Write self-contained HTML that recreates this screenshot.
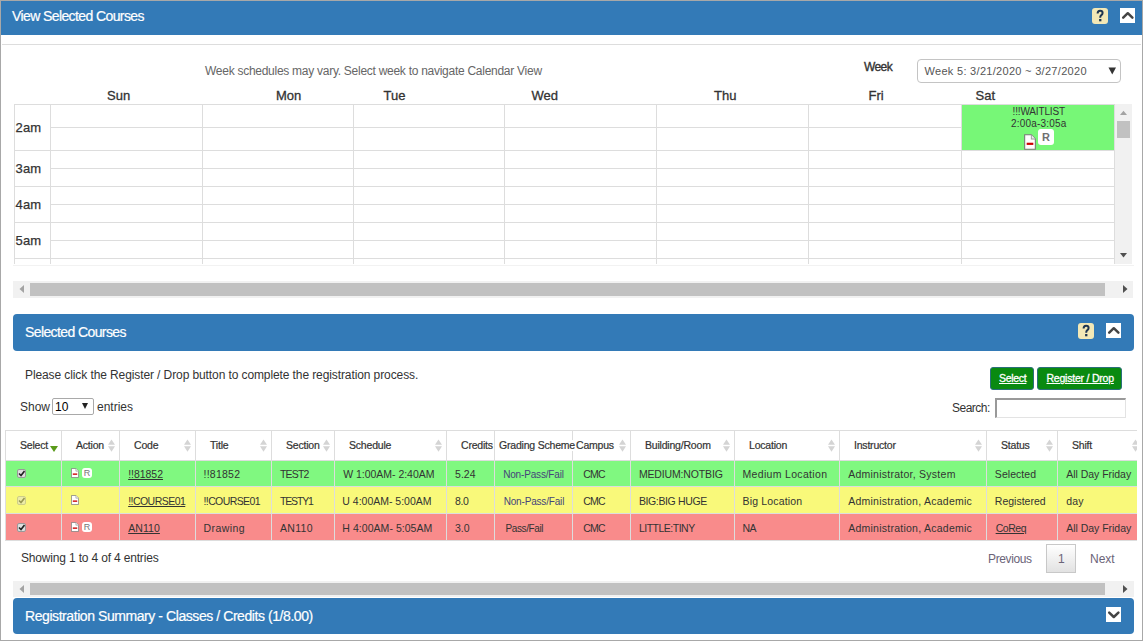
<!DOCTYPE html><html><head><meta charset="utf-8"><style>
*{box-sizing:border-box;margin:0;padding:0}
html,body{width:1143px;height:641px;overflow:hidden;background:#fff;font-family:"Liberation Sans",sans-serif;color:#333}
.a{position:absolute}
.t{position:absolute;white-space:nowrap}
.help{position:absolute;width:16px;height:16px;background:#f3e8b6;border-radius:3px}
.coll{position:absolute;width:15px;height:15px;background:#fff}
</style></head><body>
<div class="a" style="left:0px;top:0px;width:1143px;height:641px;border:1px solid #a8a8a8"></div>
<div class="a" style="left:1px;top:1px;width:1141px;height:34px;background:#337ab7"></div>
<div class="t" style="left:12px;top:9.15px;font-size:14px;line-height:14px;color:#fff;letter-spacing:-0.6px;-webkit-text-stroke:0.2px #fff">View Selected Courses</div>
<div class="help" style="left:1092px;top:8px"><svg width="16" height="16" viewBox="0 0 16 16" style="position:absolute;left:0;top:0"><path d="M5.6 5.6 C5.6 3.7 6.7 2.8 8.1 2.8 C9.6 2.8 10.6 3.8 10.6 5.1 C10.6 6.3 9.8 6.9 9.1 7.4 C8.4 7.9 8.2 8.4 8.2 9.8" fill="none" stroke="#1f3550" stroke-width="2"/><rect x="7.1" y="11" width="2.3" height="2.3" fill="#1f3550"/></svg></div>
<div class="coll" style="left:1120px;top:8px"><svg width="15" height="15" viewBox="0 0 15 15" style="position:absolute;left:0;top:0"><path d="M3.2 9.6 L7.8 5.2 L12.4 9.6" fill="none" stroke="#444" stroke-width="2.5" stroke-linecap="round" stroke-linejoin="round"/></svg></div>
<div class="a" style="left:2px;top:44px;width:1139px;height:1px;background:#ddd"></div>
<div class="t" style="left:205px;top:64.84px;font-size:12px;line-height:12px;color:#666;letter-spacing:-0.27px">Week schedules may vary. Select week to navigate Calendar View</div>
<div class="t" style="left:864px;top:61.34px;font-size:12px;line-height:12px;color:#333;-webkit-text-stroke:0.35px #333;letter-spacing:-0.6px">Week</div>
<div class="a" style="left:917px;top:59px;width:204px;height:24px;border:1px solid #c4c4c4;border-radius:4px;background:#fff"></div>
<div class="t" style="left:924.5px;top:65.99px;font-size:11px;line-height:11px;color:#555;letter-spacing:0.3px">Week 5: 3/21/2020 ~ 3/27/2020</div>
<svg class="a" style="left:1108px;top:67px" width="9" height="8" viewBox="0 0 9 8"><path d="M0.5 0.5 H8 L4.25 7.5 Z" fill="#333"/></svg>
<div class="t" style="left:107px;top:89.00px;font-size:13px;line-height:13px;color:#333;-webkit-text-stroke:0.3px #333">Sun</div>
<div class="t" style="left:276px;top:89.00px;font-size:13px;line-height:13px;color:#333;-webkit-text-stroke:0.3px #333">Mon</div>
<div class="t" style="left:383.5px;top:89.00px;font-size:13px;line-height:13px;color:#333;-webkit-text-stroke:0.3px #333">Tue</div>
<div class="t" style="left:531.5px;top:89.00px;font-size:13px;line-height:13px;color:#333;-webkit-text-stroke:0.3px #333">Wed</div>
<div class="t" style="left:714px;top:89.00px;font-size:13px;line-height:13px;color:#333;-webkit-text-stroke:0.3px #333">Thu</div>
<div class="t" style="left:868.5px;top:89.00px;font-size:13px;line-height:13px;color:#333;-webkit-text-stroke:0.3px #333">Fri</div>
<div class="t" style="left:975.5px;top:89.00px;font-size:13px;line-height:13px;color:#333;-webkit-text-stroke:0.3px #333">Sat</div>
<div class="a" style="left:14px;top:104px;width:1100px;height:1px;background:#ddd"></div>
<div class="a" style="left:50px;top:127px;width:1064px;height:1px;background:#ddd"></div>
<div class="a" style="left:14px;top:150px;width:1100px;height:1px;background:#ddd"></div>
<div class="a" style="left:50px;top:168px;width:1064px;height:1px;background:#ddd"></div>
<div class="a" style="left:14px;top:186px;width:1100px;height:1px;background:#ddd"></div>
<div class="a" style="left:50px;top:204px;width:1064px;height:1px;background:#ddd"></div>
<div class="a" style="left:14px;top:222px;width:1100px;height:1px;background:#ddd"></div>
<div class="a" style="left:50px;top:240px;width:1064px;height:1px;background:#ddd"></div>
<div class="a" style="left:14px;top:258px;width:1100px;height:1px;background:#ddd"></div>
<div class="a" style="left:14px;top:104px;width:1px;height:160px;background:#ddd"></div>
<div class="a" style="left:50px;top:104px;width:1px;height:160px;background:#ddd"></div>
<div class="a" style="left:202px;top:104px;width:1px;height:160px;background:#ddd"></div>
<div class="a" style="left:353px;top:104px;width:1px;height:160px;background:#ddd"></div>
<div class="a" style="left:504px;top:104px;width:1px;height:160px;background:#ddd"></div>
<div class="a" style="left:656px;top:104px;width:1px;height:160px;background:#ddd"></div>
<div class="a" style="left:808px;top:104px;width:1px;height:160px;background:#ddd"></div>
<div class="a" style="left:961px;top:104px;width:1px;height:160px;background:#ddd"></div>
<div class="a" style="left:1114px;top:104px;width:1px;height:160px;background:#ddd"></div>
<div class="t" style="left:15.5px;top:121.00px;font-size:13px;line-height:13px;-webkit-text-stroke:0.25px #333;letter-spacing:0.2px">2am</div>
<div class="t" style="left:15.5px;top:162.00px;font-size:13px;line-height:13px;-webkit-text-stroke:0.25px #333;letter-spacing:0.2px">3am</div>
<div class="t" style="left:15.5px;top:198.00px;font-size:13px;line-height:13px;-webkit-text-stroke:0.25px #333;letter-spacing:0.2px">4am</div>
<div class="t" style="left:15.5px;top:234.00px;font-size:13px;line-height:13px;-webkit-text-stroke:0.25px #333;letter-spacing:0.2px">5am</div>
<div class="a" style="left:962px;top:105px;width:152px;height:45px;background:#77f777"></div>
<div class="t" style="left:1012.5px;top:107.03px;font-size:10px;line-height:10px;color:#333;letter-spacing:-0.15px">!!!WAITLIST</div>
<div class="t" style="left:1011px;top:119.03px;font-size:10px;line-height:10px;color:#333;letter-spacing:0.2px">2:00a-3:05a</div>
<svg class="a" style="left:1024px;top:134px" width="12" height="16" viewBox="0 0 9 11" preserveAspectRatio="none"><path d="M0.5 0.5 H5.5 L8.5 3.5 V10.5 H0.5 Z" fill="#fff" stroke="#777" stroke-width="0.8"/><path d="M5.5 0.5 V3.5 H8.5" fill="#eee" stroke="#999" stroke-width="0.7"/><rect x="2" y="6" width="5" height="1.5" fill="#c00"/></svg>
<div class="a" style="left:1038px;top:129px;width:16px;height:16px;background:#fff;border-radius:3px;color:#707070;font-weight:bold;font-size:11px;line-height:16px;text-align:center">R</div>
<div class="a" style="left:13px;top:265px;width:1121px;height:1px;background:#f2f2f2"></div>
<div class="a" style="left:1115px;top:104px;width:17px;height:160px;background:#f1f1f1"></div>
<div class="a" style="left:1117px;top:121px;width:13px;height:17px;background:#c1c1c1"></div>
<svg class="a" style="left:1120px;top:110px" width="7" height="5" viewBox="0 0 7 5"><path d="M0 5 L3.5 0.8 L7 5Z" fill="#a3a3a3"/></svg>
<svg class="a" style="left:1120px;top:252.5px" width="7" height="5" viewBox="0 0 7 5"><path d="M0 0 L3.5 4.5 L7 0Z" fill="#505050"/></svg>
<div class="a" style="left:13px;top:281px;width:1120px;height:17px;background:#f1f1f1"></div>
<div class="a" style="left:30px;top:283px;width:1075px;height:13px;background:#c1c1c1"></div>
<svg class="a" style="left:19px;top:285px" width="5" height="8" viewBox="0 0 5 8"><path d="M5 0 L0.5 4 L5 8Z" fill="#a3a3a3"/></svg>
<svg class="a" style="left:1123px;top:285px" width="5" height="8" viewBox="0 0 5 8"><path d="M0 0 L4.5 4 L0 8Z" fill="#505050"/></svg>
<div class="a" style="left:13px;top:314px;width:1121px;height:37px;background:#337ab7;border-radius:4px"></div>
<div class="t" style="left:25px;top:325.15px;font-size:14px;line-height:14px;color:#fff;letter-spacing:-0.6px;-webkit-text-stroke:0.2px #fff">Selected Courses</div>
<div class="help" style="left:1078px;top:323px"><svg width="16" height="16" viewBox="0 0 16 16" style="position:absolute;left:0;top:0"><path d="M5.6 5.6 C5.6 3.7 6.7 2.8 8.1 2.8 C9.6 2.8 10.6 3.8 10.6 5.1 C10.6 6.3 9.8 6.9 9.1 7.4 C8.4 7.9 8.2 8.4 8.2 9.8" fill="none" stroke="#1f3550" stroke-width="2"/><rect x="7.1" y="11" width="2.3" height="2.3" fill="#1f3550"/></svg></div>
<div class="coll" style="left:1106px;top:323px"><svg width="15" height="15" viewBox="0 0 15 15" style="position:absolute;left:0;top:0"><path d="M3.2 9.6 L7.8 5.2 L12.4 9.6" fill="none" stroke="#444" stroke-width="2.5" stroke-linecap="round" stroke-linejoin="round"/></svg></div>
<div class="t" style="left:25px;top:368.84px;font-size:12px;line-height:12px;color:#333;letter-spacing:-0.1px">Please click the Register / Drop button to complete the registration process.</div>
<div class="t" style="left:20px;top:401.34px;font-size:12px;line-height:12px;">Show</div>
<div class="a" style="left:52px;top:398px;width:42px;height:17px;border:1px solid #a9a9a9;border-radius:2px;background:#fff"></div>
<div class="t" style="left:55px;top:400.84px;font-size:12px;line-height:12px;color:#000">10</div>
<svg class="a" style="left:82px;top:403px" width="6" height="6" viewBox="0 0 6 6"><path d="M0 0 H6 L3 6Z" fill="#222"/></svg>
<div class="t" style="left:97px;top:401.34px;font-size:12px;line-height:12px;">entries</div>
<div class="a" style="left:990px;top:367px;width:44px;height:23px;background:#098a10;border-radius:3px;border:1px solid #2a6f7a"></div>
<div class="a" style="left:1037px;top:367px;width:85px;height:23px;background:#098a10;border-radius:3px;border:1px solid #2a6f7a"></div>
<div class="t" style="left:999px;top:373.11px;font-size:10.5px;line-height:10.5px;color:#fff;text-decoration:underline;-webkit-text-stroke:0.3px #fff;letter-spacing:-0.3px">Select</div>
<div class="t" style="left:1046.5px;top:373.11px;font-size:10.5px;line-height:10.5px;color:#fff;text-decoration:underline;-webkit-text-stroke:0.3px #fff;letter-spacing:-0.22px">Register / Drop</div>
<div class="t" style="left:952px;top:401.84px;font-size:12px;line-height:12px;letter-spacing:-0.5px">Search:</div>
<div class="a" style="left:995px;top:398px;width:131px;height:20px;border-style:solid;border-width:2px 1px 1px 2px;border-color:#999 #e3e3e3 #e3e3e3 #999;background:#fff"></div>
<div class="a" style="left:0;top:0;width:1137px;height:641px;overflow:hidden">
<div class="a" style="left:5px;top:460px;width:1140px;height:26px;background:#80f880"></div>
<div class="a" style="left:5px;top:486px;width:1140px;height:27px;background:#f9f97a"></div>
<div class="a" style="left:5px;top:513px;width:1140px;height:27px;background:#f98b8b"></div>
<div class="a" style="left:5px;top:430px;width:1140px;height:1px;background:#ddd"></div>
<div class="a" style="left:5px;top:460px;width:1140px;height:1px;background:#ddd"></div>
<div class="a" style="left:5px;top:486px;width:1140px;height:1px;background:#ddd"></div>
<div class="a" style="left:5px;top:513px;width:1140px;height:1px;background:#ddd"></div>
<div class="a" style="left:5px;top:540px;width:1140px;height:1px;background:#ddd"></div>
<div class="a" style="left:5px;top:430px;width:1px;height:111px;background:#ddd"></div>
<div class="a" style="left:61px;top:430px;width:1px;height:111px;background:#ddd"></div>
<div class="a" style="left:119px;top:430px;width:1px;height:111px;background:#ddd"></div>
<div class="a" style="left:195px;top:430px;width:1px;height:111px;background:#ddd"></div>
<div class="a" style="left:271px;top:430px;width:1px;height:111px;background:#ddd"></div>
<div class="a" style="left:334px;top:430px;width:1px;height:111px;background:#ddd"></div>
<div class="a" style="left:446px;top:430px;width:1px;height:111px;background:#ddd"></div>
<div class="a" style="left:494px;top:430px;width:1px;height:111px;background:#ddd"></div>
<div class="a" style="left:572px;top:430px;width:1px;height:111px;background:#ddd"></div>
<div class="a" style="left:630px;top:430px;width:1px;height:111px;background:#ddd"></div>
<div class="a" style="left:734px;top:430px;width:1px;height:111px;background:#ddd"></div>
<div class="a" style="left:839px;top:430px;width:1px;height:111px;background:#ddd"></div>
<div class="a" style="left:986px;top:430px;width:1px;height:111px;background:#ddd"></div>
<div class="a" style="left:1057px;top:430px;width:1px;height:111px;background:#ddd"></div>
<div class="t" style="left:20px;top:440.11px;font-size:10.5px;line-height:10.5px;color:#333;letter-spacing:-0.2px;-webkit-text-stroke:0.2px #333">Select</div>
<div class="t" style="left:76px;top:440.11px;font-size:10.5px;line-height:10.5px;color:#333;letter-spacing:-0.2px;-webkit-text-stroke:0.2px #333">Action</div>
<svg class="a" style="left:108px;top:439px" width="7" height="14" viewBox="0 0 7 14"><path d="M0 5.8 L3.5 0.5 L7 5.8Z M0 7.2 L3.5 12.8 L7 7.2Z" fill="#d4d4d4"/></svg>
<div class="t" style="left:134px;top:440.11px;font-size:10.5px;line-height:10.5px;color:#333;letter-spacing:-0.2px;-webkit-text-stroke:0.2px #333">Code</div>
<svg class="a" style="left:184px;top:439px" width="7" height="14" viewBox="0 0 7 14"><path d="M0 5.8 L3.5 0.5 L7 5.8Z M0 7.2 L3.5 12.8 L7 7.2Z" fill="#d4d4d4"/></svg>
<div class="t" style="left:210px;top:440.11px;font-size:10.5px;line-height:10.5px;color:#333;letter-spacing:-0.2px;-webkit-text-stroke:0.2px #333">Title</div>
<svg class="a" style="left:260px;top:439px" width="7" height="14" viewBox="0 0 7 14"><path d="M0 5.8 L3.5 0.5 L7 5.8Z M0 7.2 L3.5 12.8 L7 7.2Z" fill="#d4d4d4"/></svg>
<div class="t" style="left:286px;top:440.11px;font-size:10.5px;line-height:10.5px;color:#333;letter-spacing:-0.2px;-webkit-text-stroke:0.2px #333">Section</div>
<svg class="a" style="left:323px;top:439px" width="7" height="14" viewBox="0 0 7 14"><path d="M0 5.8 L3.5 0.5 L7 5.8Z M0 7.2 L3.5 12.8 L7 7.2Z" fill="#d4d4d4"/></svg>
<div class="t" style="left:349px;top:440.11px;font-size:10.5px;line-height:10.5px;color:#333;letter-spacing:-0.2px;-webkit-text-stroke:0.2px #333">Schedule</div>
<svg class="a" style="left:435px;top:439px" width="7" height="14" viewBox="0 0 7 14"><path d="M0 5.8 L3.5 0.5 L7 5.8Z M0 7.2 L3.5 12.8 L7 7.2Z" fill="#d4d4d4"/></svg>
<div class="t" style="left:461px;top:440.11px;font-size:10.5px;line-height:10.5px;color:#333;letter-spacing:-0.2px;-webkit-text-stroke:0.2px #333;background:#fff">Credits</div>
<div class="t" style="left:499px;top:440.11px;font-size:10.5px;line-height:10.5px;color:#333;letter-spacing:-0.2px;-webkit-text-stroke:0.2px #333;background:#fff">Grading Scheme</div>
<div class="t" style="left:576px;top:440.11px;font-size:10.5px;line-height:10.5px;color:#333;letter-spacing:-0.2px;-webkit-text-stroke:0.2px #333">Campus</div>
<svg class="a" style="left:619px;top:439px" width="7" height="14" viewBox="0 0 7 14"><path d="M0 5.8 L3.5 0.5 L7 5.8Z M0 7.2 L3.5 12.8 L7 7.2Z" fill="#d4d4d4"/></svg>
<div class="t" style="left:645px;top:440.11px;font-size:10.5px;line-height:10.5px;color:#333;letter-spacing:-0.2px;-webkit-text-stroke:0.2px #333">Building/Room</div>
<svg class="a" style="left:723px;top:439px" width="7" height="14" viewBox="0 0 7 14"><path d="M0 5.8 L3.5 0.5 L7 5.8Z M0 7.2 L3.5 12.8 L7 7.2Z" fill="#d4d4d4"/></svg>
<div class="t" style="left:749px;top:440.11px;font-size:10.5px;line-height:10.5px;color:#333;letter-spacing:-0.2px;-webkit-text-stroke:0.2px #333">Location</div>
<svg class="a" style="left:828px;top:439px" width="7" height="14" viewBox="0 0 7 14"><path d="M0 5.8 L3.5 0.5 L7 5.8Z M0 7.2 L3.5 12.8 L7 7.2Z" fill="#d4d4d4"/></svg>
<div class="t" style="left:854px;top:440.11px;font-size:10.5px;line-height:10.5px;color:#333;letter-spacing:-0.2px;-webkit-text-stroke:0.2px #333">Instructor</div>
<svg class="a" style="left:975px;top:439px" width="7" height="14" viewBox="0 0 7 14"><path d="M0 5.8 L3.5 0.5 L7 5.8Z M0 7.2 L3.5 12.8 L7 7.2Z" fill="#d4d4d4"/></svg>
<div class="t" style="left:1001px;top:440.11px;font-size:10.5px;line-height:10.5px;color:#333;letter-spacing:-0.2px;-webkit-text-stroke:0.2px #333">Status</div>
<svg class="a" style="left:1046px;top:439px" width="7" height="14" viewBox="0 0 7 14"><path d="M0 5.8 L3.5 0.5 L7 5.8Z M0 7.2 L3.5 12.8 L7 7.2Z" fill="#d4d4d4"/></svg>
<div class="t" style="left:1072px;top:440.11px;font-size:10.5px;line-height:10.5px;color:#333;letter-spacing:-0.2px;-webkit-text-stroke:0.2px #333">Shift</div>
<svg class="a" style="left:1132px;top:439px" width="7" height="14" viewBox="0 0 7 14"><path d="M0 5.8 L3.5 0.5 L7 5.8Z M0 7.2 L3.5 12.8 L7 7.2Z" fill="#d4d4d4"/></svg>
<svg class="a" style="left:50px;top:446px" width="8" height="6" viewBox="0 0 8 6"><path d="M0 0 H8 L4 6Z" fill="#5a9a1a"/></svg>
<div class="t" style="left:128.16px;top:469.21px;font-size:10.5px;line-height:10.5px;color:#333;text-decoration:underline;text-underline-offset:1px;letter-spacing:-0.028px">!!81852</div>
<div class="t" style="left:203.52px;top:469.21px;font-size:10.5px;line-height:10.5px;color:#333;letter-spacing:0.240px">!!81852</div>
<div class="t" style="left:280.0px;top:469.21px;font-size:10.5px;line-height:10.5px;color:#333;letter-spacing:-0.840px">TEST2</div>
<div class="t" style="left:343.16px;top:469.21px;font-size:10.5px;line-height:10.5px;color:#333;letter-spacing:-0.020px">W 1:00AM- 2:40AM</div>
<div class="t" style="left:455.0px;top:469.21px;font-size:10.5px;line-height:10.5px;color:#333;letter-spacing:0.052px">5.24</div>
<div class="t" style="left:503.2px;top:469.64px;font-size:10px;line-height:10px;color:#45457a;letter-spacing:-0.173px">Non-Pass/Fail</div>
<div class="t" style="left:583.32px;top:469.21px;font-size:10.5px;line-height:10.5px;color:#333;letter-spacing:-0.880px">CMC</div>
<div class="t" style="left:638.88px;top:469.21px;font-size:10.5px;line-height:10.5px;color:#333;letter-spacing:-0.146px">MEDIUM:NOTBIG</div>
<div class="t" style="left:742.52px;top:469.21px;font-size:10.5px;line-height:10.5px;color:#333;letter-spacing:0.321px">Medium Location</div>
<div class="t" style="left:848.16px;top:469.21px;font-size:10.5px;line-height:10.5px;color:#333;letter-spacing:0.256px">Administrator, System</div>
<div class="t" style="left:994.84px;top:469.21px;font-size:10.5px;line-height:10.5px;color:#333;letter-spacing:0.047px">Selected</div>
<div class="t" style="left:1066.32px;top:469.21px;font-size:10.5px;line-height:10.5px;color:#333;letter-spacing:-0.038px">All Day Friday</div>
<div class="a" style="left:17px;top:469px;width:9px;height:9px;background:#dedede;border:1px solid #999;border-radius:2px"><svg width="7" height="7" viewBox="0 0 7 7" style="position:absolute;left:0;top:0"><path d="M1 3.5 L3 5.5 L6.5 1" fill="none" stroke="#222" stroke-width="1.6"/></svg></div>
<svg class="a" style="left:71px;top:468px" width="8" height="10" viewBox="0 0 9 11" preserveAspectRatio="none"><path d="M0.5 0.5 H5.5 L8.5 3.5 V10.5 H0.5 Z" fill="#fff" stroke="#777" stroke-width="0.8"/><path d="M5.5 0.5 V3.5 H8.5" fill="#eee" stroke="#999" stroke-width="0.7"/><rect x="2" y="6" width="5" height="1.5" fill="#c00"/></svg>
<div class="a" style="left:82px;top:468px;width:10px;height:10px;background:#fff;border-radius:3px;color:#777;font-size:9px;line-height:10px;text-align:center">R</div>
<div class="t" style="left:128.16px;top:496.21px;font-size:10.5px;line-height:10.5px;color:#333;text-decoration:underline;text-underline-offset:1px;letter-spacing:-0.533px">!!COURSE01</div>
<div class="t" style="left:203.52px;top:496.21px;font-size:10.5px;line-height:10.5px;color:#333;letter-spacing:-0.606px">!!COURSE01</div>
<div class="t" style="left:280.0px;top:496.21px;font-size:10.5px;line-height:10.5px;color:#333;letter-spacing:-1.152px">TESTY1</div>
<div class="t" style="left:342.36px;top:496.21px;font-size:10.5px;line-height:10.5px;color:#333;letter-spacing:-0.010px">U 4:00AM- 5:00AM</div>
<div class="t" style="left:455.0px;top:496.21px;font-size:10.5px;line-height:10.5px;color:#333;letter-spacing:-0.400px">8.0</div>
<div class="t" style="left:503.68px;top:496.64px;font-size:10px;line-height:10px;color:#45457a;letter-spacing:-0.173px">Non-Pass/Fail</div>
<div class="t" style="left:583.32px;top:496.21px;font-size:10.5px;line-height:10.5px;color:#333;letter-spacing:-0.880px">CMC</div>
<div class="t" style="left:638.88px;top:496.21px;font-size:10.5px;line-height:10.5px;color:#333;letter-spacing:-0.364px">BIG:BIG HUGE</div>
<div class="t" style="left:742.52px;top:496.21px;font-size:10.5px;line-height:10.5px;color:#333;letter-spacing:0.160px">Big Location</div>
<div class="t" style="left:848.16px;top:496.21px;font-size:10.5px;line-height:10.5px;color:#333;letter-spacing:0.251px">Administration, Academic</div>
<div class="t" style="left:994.84px;top:496.21px;font-size:10.5px;line-height:10.5px;color:#333;letter-spacing:-0.000px">Registered</div>
<div class="t" style="left:1066.32px;top:496.21px;font-size:10.5px;line-height:10.5px;color:#333;letter-spacing:0.160px">day</div>
<div class="a" style="left:17px;top:496px;width:9px;height:9px;background:#dedede;border:1px solid #999;border-radius:2px;opacity:0.45"><svg width="7" height="7" viewBox="0 0 7 7" style="position:absolute;left:0;top:0"><path d="M1 3.5 L3 5.5 L6.5 1" fill="none" stroke="#222" stroke-width="1.6"/></svg></div>
<svg class="a" style="left:71px;top:495px" width="8" height="10" viewBox="0 0 9 11" preserveAspectRatio="none"><path d="M0.5 0.5 H5.5 L8.5 3.5 V10.5 H0.5 Z" fill="#fff" stroke="#777" stroke-width="0.8"/><path d="M5.5 0.5 V3.5 H8.5" fill="#eee" stroke="#999" stroke-width="0.7"/><rect x="2" y="6" width="5" height="1.5" fill="#c00"/></svg>
<div class="t" style="left:128.16px;top:523.21px;font-size:10.5px;line-height:10.5px;color:#333;text-decoration:underline;text-underline-offset:1px;letter-spacing:0.080px">AN110</div>
<div class="t" style="left:203.52px;top:523.21px;font-size:10.5px;line-height:10.5px;color:#333;letter-spacing:0.426px">Drawing</div>
<div class="t" style="left:280.0px;top:523.21px;font-size:10.5px;line-height:10.5px;color:#333;letter-spacing:0.320px">AN110</div>
<div class="t" style="left:342.36px;top:523.21px;font-size:10.5px;line-height:10.5px;color:#333;letter-spacing:0.042px">H 4:00AM- 5:05AM</div>
<div class="t" style="left:455.0px;top:523.21px;font-size:10.5px;line-height:10.5px;color:#333;letter-spacing:0.000px">3.0</div>
<div class="t" style="left:505.52px;top:523.63px;font-size:10px;line-height:10px;color:#333;letter-spacing:-0.400px">Pass/Fail</div>
<div class="t" style="left:583.32px;top:523.21px;font-size:10.5px;line-height:10.5px;color:#333;letter-spacing:-0.880px">CMC</div>
<div class="t" style="left:638.88px;top:523.21px;font-size:10.5px;line-height:10.5px;color:#333;letter-spacing:-0.496px">LITTLE:TINY</div>
<div class="t" style="left:742.52px;top:523.21px;font-size:10.5px;line-height:10.5px;color:#333;letter-spacing:-0.480px">NA</div>
<div class="t" style="left:848.16px;top:523.21px;font-size:10.5px;line-height:10.5px;color:#333;letter-spacing:0.251px">Administration, Academic</div>
<div class="t" style="left:995.64px;top:523.21px;font-size:10.5px;line-height:10.5px;color:#333;text-decoration:underline;text-underline-offset:1px;letter-spacing:-0.440px">CoReq</div>
<div class="t" style="left:1066.32px;top:523.21px;font-size:10.5px;line-height:10.5px;color:#333;letter-spacing:-0.037px">All Day Friday</div>
<div class="a" style="left:17px;top:523px;width:9px;height:9px;background:#dedede;border:1px solid #999;border-radius:2px"><svg width="7" height="7" viewBox="0 0 7 7" style="position:absolute;left:0;top:0"><path d="M1 3.5 L3 5.5 L6.5 1" fill="none" stroke="#222" stroke-width="1.6"/></svg></div>
<svg class="a" style="left:71px;top:522px" width="8" height="10" viewBox="0 0 9 11" preserveAspectRatio="none"><path d="M0.5 0.5 H5.5 L8.5 3.5 V10.5 H0.5 Z" fill="#fff" stroke="#777" stroke-width="0.8"/><path d="M5.5 0.5 V3.5 H8.5" fill="#eee" stroke="#999" stroke-width="0.7"/><rect x="2" y="6" width="5" height="1.5" fill="#c00"/></svg>
<div class="a" style="left:82px;top:522px;width:10px;height:10px;background:#fff;border-radius:3px;color:#777;font-size:9px;line-height:10px;text-align:center">R</div>
</div>
<div class="t" style="left:21px;top:551.84px;font-size:12px;line-height:12px;letter-spacing:-0.17px">Showing 1 to 4 of 4 entries</div>
<div class="t" style="left:988px;top:552.84px;font-size:12px;line-height:12px;color:#6b6478;letter-spacing:-0.37px">Previous</div>
<div class="a" style="left:1046px;top:544px;width:30px;height:29px;border:1px solid #c8c8c8;background:linear-gradient(#fff,#e2e2e2)"></div>
<div class="t" style="left:1058px;top:552.84px;font-size:12px;line-height:12px;color:#6b6478">1</div>
<div class="t" style="left:1090px;top:552.84px;font-size:12px;line-height:12px;color:#6b6478">Next</div>
<div class="a" style="left:13px;top:581px;width:1121px;height:16px;background:#f1f1f1"></div>
<div class="a" style="left:30px;top:583px;width:1075px;height:12px;background:#c1c1c1"></div>
<svg class="a" style="left:19px;top:585px" width="5" height="8" viewBox="0 0 5 8"><path d="M5 0 L0.5 4 L5 8Z" fill="#a3a3a3"/></svg>
<svg class="a" style="left:1123px;top:585px" width="5" height="8" viewBox="0 0 5 8"><path d="M0 0 L4.5 4 L0 8Z" fill="#505050"/></svg>
<div class="a" style="left:13px;top:598px;width:1121px;height:36px;background:#337ab7;border-radius:4px"></div>
<div class="t" style="left:25px;top:608.65px;font-size:14px;line-height:14px;color:#fff;letter-spacing:-0.43px;-webkit-text-stroke:0.2px #fff">Registration Summary - Classes / Credits (1/8.00)</div>
<div class="coll" style="left:1106px;top:607px"><svg width="15" height="15" viewBox="0 0 15 15" style="position:absolute;left:0;top:0"><path d="M3.2 5.6 L7.8 10 L12.4 5.6" fill="none" stroke="#444" stroke-width="2.5" stroke-linecap="round" stroke-linejoin="round"/></svg></div>
</body></html>
